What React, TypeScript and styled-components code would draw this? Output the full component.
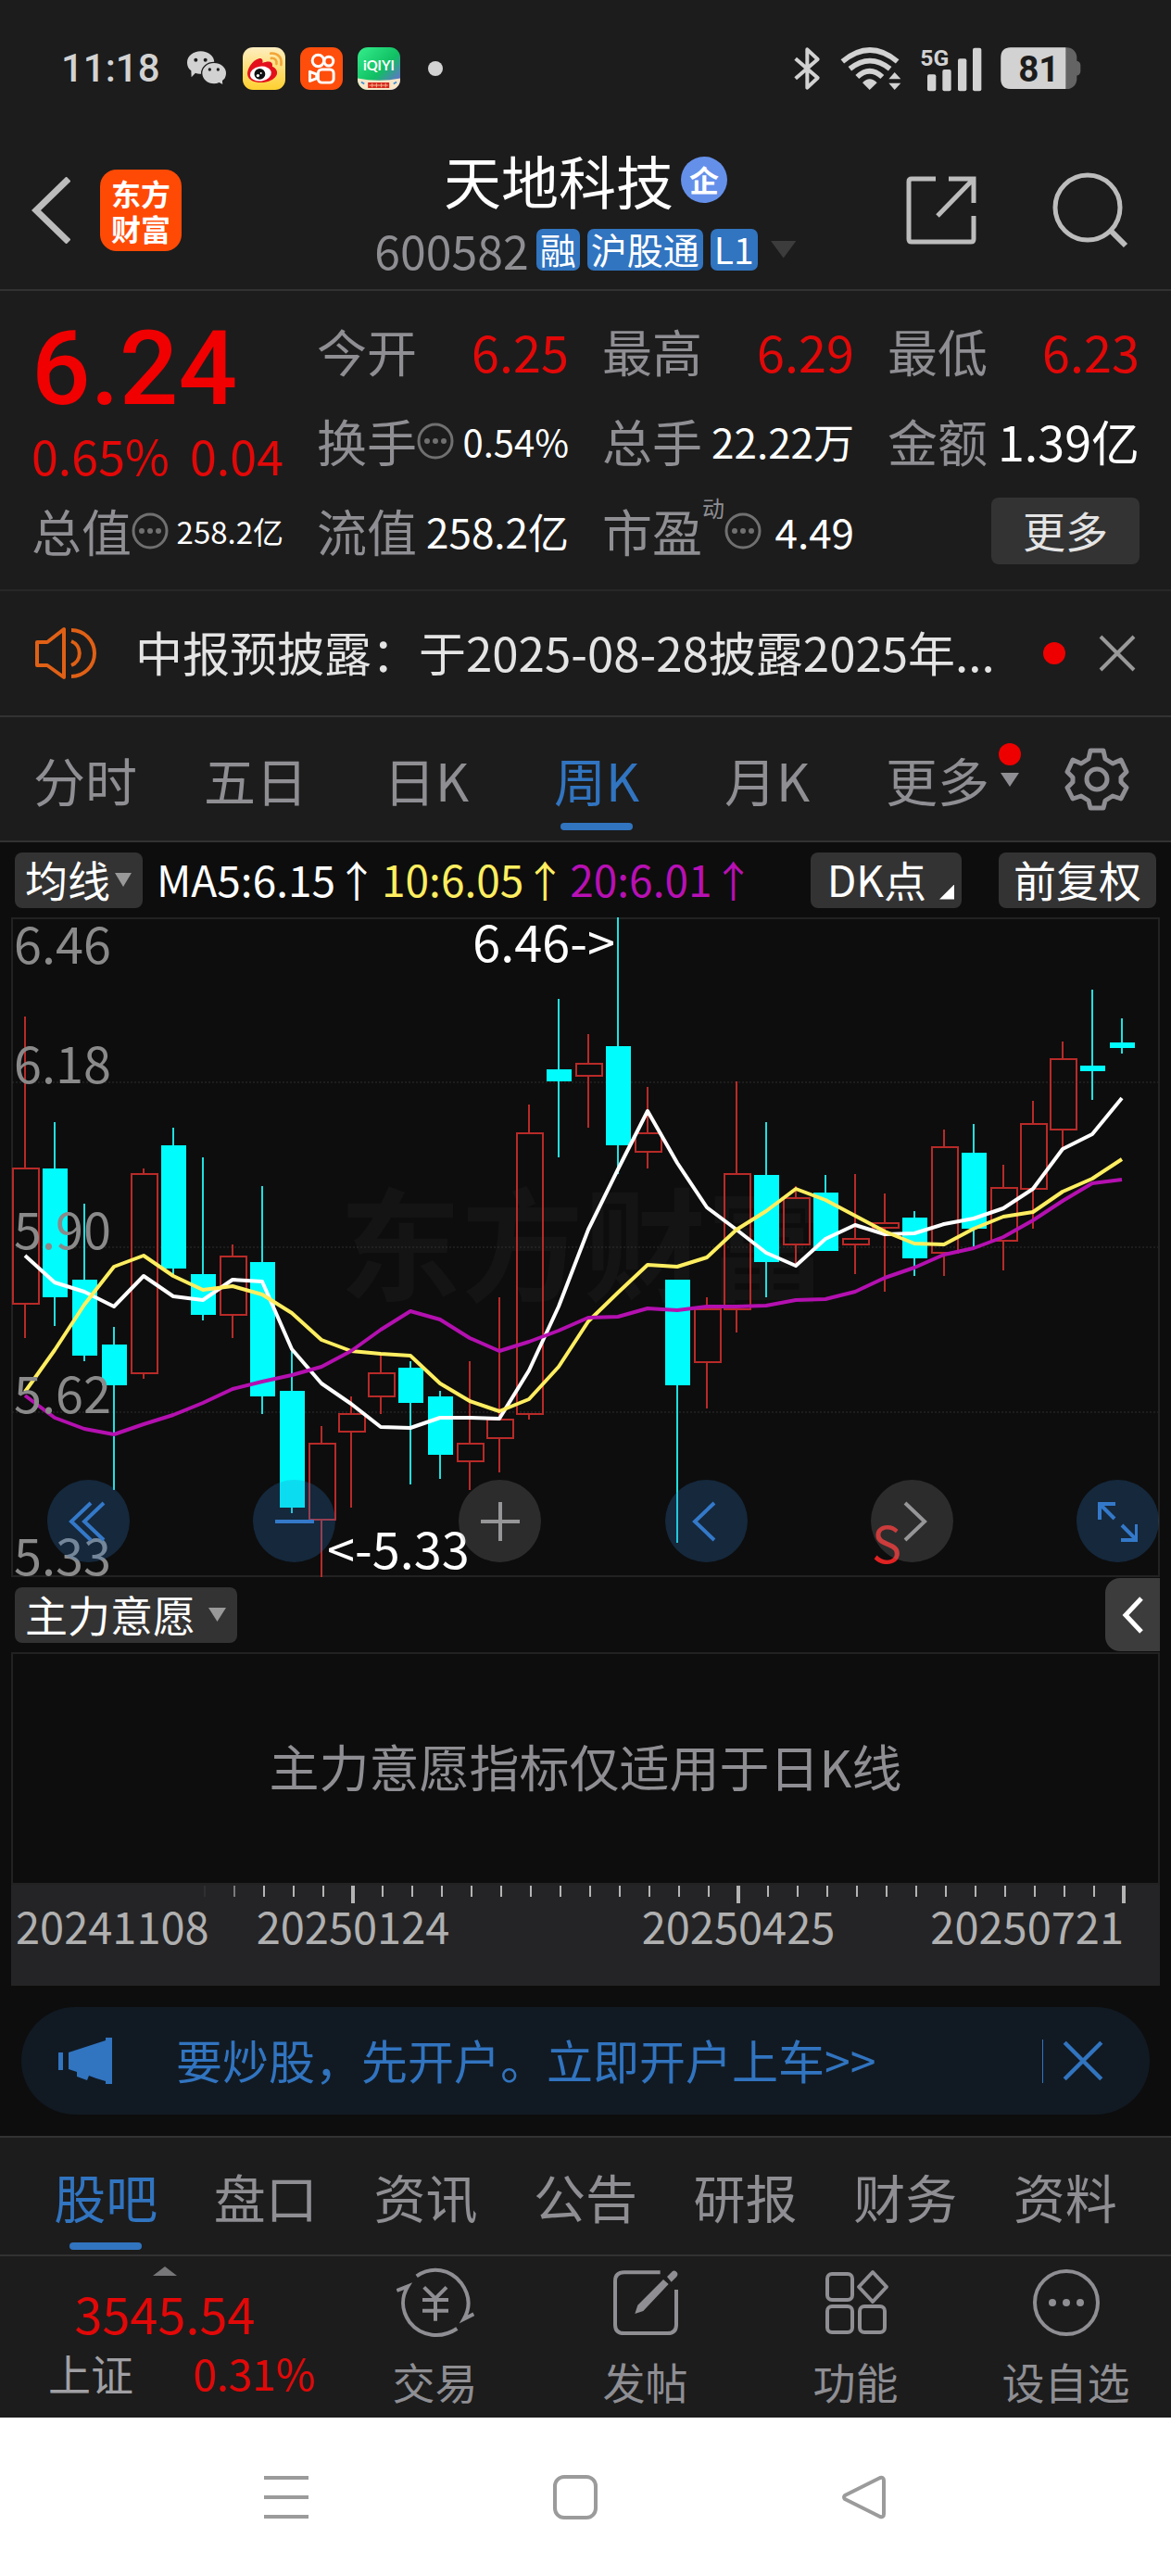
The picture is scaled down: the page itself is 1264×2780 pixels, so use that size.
import React from 'react';
import styled, { createGlobalStyle } from 'styled-components';

const c = {
  panel: '#1c1c1c',
  dark: '#0d0d0d',
  line: '#323232',
  frame: '#222222',
  grey: '#8e8e93',
  blue: '#3174c0',
  red: '#e20808',
  chip: '#333333',
  status: '#d2d2d2',
};

const GlobalStyle = createGlobalStyle`
  * { box-sizing: border-box; }
  body {
    margin: 0;
    background: #ffffff;
    font-family: "Noto Sans CJK SC", "Noto Sans", sans-serif;
    color: #ffffff;
  }
  button, select {
    font: inherit;
    color: inherit;
    background: none;
    border: 0;
    border-radius: 0;
    padding: 0;
    margin: 0;
    cursor: pointer;
  }
  svg { display: block; flex: none; }
`;

const Page = styled.div`
  display: flex;
  flex-direction: column;
  background: ${c.panel};
`;

/* ---------- status bar ---------- */

const StatusBar = styled.div`
  display: flex;
  align-items: center;
  justify-content: space-between;
  height: 148px;
  padding: 0 97px 0 66px;
`;

const StatusGroup = styled.div<{ $gap: number }>`
  display: flex;
  align-items: center;
  gap: ${p => p.$gap}px;
`;

const Clock = styled.time`
  font-family: Roboto, sans-serif;
  font-size: 42px;
  font-weight: 500;
  line-height: 48px;
  color: ${c.status};
  margin-right: 12px;
`;

const Dot = styled.span`
  width: 16px;
  height: 16px;
  margin-left: 14px;
  border-radius: 50%;
  background: ${c.status};
`;

/* ---------- header ---------- */

const Header = styled.header`
  display: grid;
  grid-template-columns: 1fr auto 1fr;
  align-items: center;
  height: 166px;
  padding: 0 34px 6px;
  border-bottom: 2px solid ${c.line};
`;

const HeaderSide = styled.div<{ $end?: boolean }>`
  display: flex;
  align-items: center;
  gap: ${p => (p.$end ? 82 : 32)}px;
  justify-content: ${p => (p.$end ? 'flex-end' : 'flex-start')};
  padding-right: ${p => (p.$end ? 12 : 0)}px;
`;

const Logo = styled.a`
  display: flex;
  flex-direction: column;
  justify-content: center;
  align-items: center;
  width: 88px;
  height: 88px;
  border-radius: 18px;
  background: #ff4a05;
  color: #ffffff;
  font-size: 32px;
  font-weight: 700;
  line-height: 38px;
  text-decoration: none;
`;

const TitleBlock = styled.div`
  display: flex;
  flex-direction: column;
  align-items: center;
  gap: 22px;
`;

const TitleLine = styled.div`
  display: flex;
  align-items: center;
  gap: 8px;
`;

const Title = styled.h1`
  margin: 0;
  font-size: 62px;
  font-weight: 400;
  line-height: 62px;
`;

const Badge = styled.span`
  width: 50px;
  height: 50px;
  border-radius: 50%;
  background: #6590ea;
  font-size: 32px;
  font-weight: 700;
  line-height: 48px;
  text-align: center;
`;

const Code = styled.span`
  font-size: 50px;
  line-height: 45px;
  color: ${c.grey};
`;

const Tag = styled.span`
  height: 45px;
  padding: 0 4px;
  border-radius: 7px;
  background: ${c.blue};
  font-size: 39px;
  line-height: 43px;
`;

const Caret = styled.span<{ $w: number; $h: number; $color: string; $up?: boolean }>`
  flex: none;
  width: ${p => p.$w}px;
  height: ${p => p.$h}px;
  background: ${p => p.$color};
  clip-path: ${p => (p.$up ? 'polygon(0 100%, 50% 0, 100% 100%)' : 'polygon(0 0, 100% 0, 50% 100%)')};
`;

const CaretButton = styled.button`
  padding: 0 0 0 6px;
  display: flex;
`;

const IconButton = styled.button`
  display: flex;
  align-items: center;
  justify-content: center;
`;

/* ---------- quote ---------- */

const Quote = styled.section`
  display: grid;
  grid-template-columns: repeat(4, 1fr);
  column-gap: 36px;
  padding: 16px 34px 15px;
  border-bottom: 2px solid #272727;
`;

const Column = styled.div`
  display: flex;
  flex-direction: column;
`;

const Price = styled.div`
  height: 128px;
  font-family: Roboto, sans-serif;
  font-size: 112px;
  font-weight: 500;
  line-height: 136px;
  color: #f00000;
`;

const Change = styled.div`
  display: flex;
  justify-content: space-between;
  height: 66px;
  font-size: 52px;
  line-height: 66px;
  color: ${c.red};
`;

const Cell = styled.div`
  display: flex;
  align-items: center;
  height: 97px;
  white-space: nowrap;
`;

const CellLabel = styled.span`
  font-size: 54px;
  line-height: 60px;
  color: ${c.grey};
`;

const Sup = styled.sup`
  align-self: flex-start;
  margin-top: 10px;
  font-size: 24px;
  line-height: 28px;
  color: ${c.grey};
`;

const CellValue = styled.span<{ $size: number; $up?: boolean }>`
  margin-left: auto;
  font-size: ${p => p.$size}px;
  line-height: 60px;
  color: ${p => (p.$up ? c.red : '#ffffff')};
`;

const MoreButton = styled.button`
  width: 160px;
  height: 72px;
  margin-left: auto;
  border-radius: 8px;
  background: ${c.chip};
  font-size: 46px;
  line-height: 68px;
  padding-bottom: 4px;
  color: #e4e4e4;
`;

/* ---------- notice ---------- */

const Notice = styled.section`
  display: flex;
  align-items: center;
  height: 136px;
  padding: 0 38px;
  border-bottom: 2px solid ${c.line};
`;

const NoticeText = styled.a`
  flex: 1;
  min-width: 0;
  margin: 0 50px 0 40px;
  padding-bottom: 4px;
  font-size: 51px;
  line-height: 76px;
  color: #e4e4e4;
  text-decoration: none;
  white-space: nowrap;
`;

const RedDot = styled.span`
  flex: none;
  width: 24px;
  height: 24px;
  border-radius: 50%;
  background: #ee0000;
`;

const NoticeClose = styled(IconButton)`
  margin-left: 36px;
  color: #999999;
`;

/* ---------- tabs ---------- */

const PeriodTabs = styled.nav`
  display: flex;
  height: 135px;
  border-bottom: 2px solid ${c.line};
`;

const SectionTabs = styled.nav`
  display: flex;
  height: 130px;
  padding: 0 28px;
  border-top: 2px solid ${c.line};
  border-bottom: 2px solid ${c.line};
`;

const Tab = styled.button<{ $active?: boolean }>`
  position: relative;
  flex: 1;
  font-size: 56px;
  line-height: 64px;
  color: ${p => (p.$active ? c.blue : c.grey)};
`;

const Underline = styled.span<{ $bottom: number }>`
  position: absolute;
  left: 50%;
  bottom: ${p => p.$bottom}px;
  width: 78px;
  height: 8px;
  margin-left: -39px;
  border-radius: 4px;
  background: ${c.blue};
`;

const TabMark = styled.span`
  position: absolute;
  top: 28px;
  right: 2px;
  display: flex;
  flex-direction: column;
  align-items: center;
  gap: 8px;
`;

const GearButton = styled(IconButton)`
  width: 160px;
`;

/* ---------- chart ---------- */

const ChartArea = styled.main`
  background: ${c.dark};
`;

const ChartInner = styled.div`
  padding: 0 12px;
`;

const Indicators = styled.div`
  display: flex;
  align-items: center;
  height: 81px;
  padding: 0 4px;
`;

const Chip = styled.label`
  display: flex;
  align-items: center;
  height: 60px;
  padding: 0 12px 0 11px;
  border-radius: 8px;
  background: ${c.chip};
`;

const ChipSelect = styled.select<{ $gap: number }>`
  appearance: none;
  outline: none;
  margin-right: ${p => p.$gap}px;
  padding-bottom: 4px;
  font-size: 46px;
  line-height: 68px;
`;

const ChipButton = styled.button<{ $wide?: boolean }>`
  display: flex;
  align-items: center;
  gap: 14px;
  height: 60px;
  padding: ${p => (p.$wide ? '0 16px 4px' : '0 8px 4px 18px')};
  border-radius: 8px;
  background: ${c.chip};
  font-size: 46px;
  line-height: 56px;
`;

const Corner = styled.span`
  width: 16px;
  height: 16px;
  margin-top: 30px;
  background: #ffffff;
  clip-path: polygon(100% 0, 100% 100%, 0 100%);
`;

const MaValues = styled.div`
  display: flex;
  flex: 1;
  gap: 4px;
  margin-left: 15px;
  padding-bottom: 4px;
  white-space: nowrap;
`;

const Ma = styled.span<{ $color: string }>`
  font-size: 46px;
  line-height: 60px;
  color: ${p => p.$color};
`;

const ChipRow = styled.div`
  display: flex;
  gap: 40px;
`;

const Plot = styled.div`
  position: relative;
`;

const PlotSvg = styled.svg`
  width: 100%;
  height: auto;
  overflow: visible;
  font-family: "Noto Sans CJK SC", sans-serif;
`;

const PlotControls = styled.div`
  position: absolute;
  left: 39px;
  right: 1px;
  bottom: 16px;
  display: flex;
  justify-content: space-between;
`;

const RoundButton = styled.button<{ $muted?: boolean }>`
  width: 89px;
  height: 89px;
  border-radius: 50%;
  display: flex;
  align-items: center;
  justify-content: center;
  color: ${p => (p.$muted ? '#969699' : '#3479c9')};
  background: ${p => (p.$muted ? 'rgba(138, 138, 138, 0.25)' : 'rgba(46, 124, 205, 0.25)')};
`;

const SubHeader = styled.div`
  display: flex;
  align-items: center;
  justify-content: space-between;
  height: 81px;
  padding-left: 4px;
`;

const Expand = styled.button`
  display: flex;
  align-items: center;
  justify-content: center;
  width: 59px;
  height: 79px;
  border-radius: 16px 0 0 16px;
  background: #3c3c3c;
`;

const SubPanel = styled.div`
  display: flex;
  align-items: center;
  justify-content: center;
  height: 251px;
  padding-bottom: 6px;
  border: 2px solid ${c.frame};
  font-size: 54px;
  line-height: 64px;
  color: ${c.grey};
`;

const Axis = styled.div`
  background: #242426;
`;

/* ---------- promo ---------- */

const PromoWrap = styled.div`
  padding: 23px;
`;

const Promo = styled.div`
  display: flex;
  align-items: center;
  height: 116px;
  padding: 0 50px 0 39px;
  border-radius: 58px;
  background: #111a23;
  color: ${c.blue};
`;

const PromoLink = styled.a`
  flex: 1;
  margin-left: 68px;
  padding-bottom: 4px;
  font-size: 50px;
  line-height: 60px;
  color: inherit;
  text-decoration: none;
  white-space: nowrap;
`;

const Divider = styled.span`
  width: 1px;
  height: 47px;
  margin-right: 21px;
  background: ${c.blue};
`;

/* ---------- bottom ---------- */

const BottomBar = styled.footer`
  display: flex;
  height: 174px;
`;

const IndexBox = styled.button`
  display: flex;
  flex-direction: column;
  align-items: center;
  width: 356px;
  padding-top: 11px;
  color: ${c.red};
`;

const IndexValue = styled.span`
  margin-top: 10px;
  font-size: 54px;
  line-height: 60px;
`;

const IndexRow = styled.span`
  display: flex;
  justify-content: space-between;
  align-self: stretch;
  padding: 0 16px 0 52px;
  margin-top: 8px;
  font-size: 46px;
  line-height: 52px;
`;

const IndexName = styled.span`
  color: #a0a0a4;
`;

const Action = styled.button`
  display: flex;
  flex-direction: column;
  align-items: center;
  flex: 1;
  padding-top: 8px;
  gap: 14px;
  font-size: 46px;
  line-height: 56px;
  color: ${c.grey};
`;

const SystemNav = styled.nav`
  display: grid;
  grid-template-columns: repeat(3, 1fr);
  align-items: center;
  height: 171px;
  padding: 0 175px 0 153px;
  background: #ffffff;
`;

/* ---------- data ---------- */

type Candle = [high: number, top: number, bottom: number, low: number, up: 0 | 1];

const candles: Candle[] = [
  [1097, 1261, 1407, 1444, 1], [1211, 1261, 1400, 1431, 0], [1299, 1381, 1463, 1469, 0],
  [1432, 1451, 1495, 1608, 0], [1261, 1267, 1482, 1488, 1], [1217, 1236, 1369, 1375, 0],
  [1249, 1375, 1419, 1425, 0], [1343, 1356, 1419, 1444, 1], [1280, 1362, 1507, 1526, 0],
  [1455, 1501, 1627, 1633, 0], [1539, 1558, 1640, 1702, 1], [1507, 1526, 1545, 1627, 1],
  [1463, 1482, 1507, 1526, 1], [1469, 1476, 1514, 1602, 0], [1501, 1507, 1570, 1596, 0],
  [1469, 1558, 1577, 1608, 1], [1400, 1532, 1552, 1589, 1], [1192, 1223, 1526, 1532, 1],
  [1078, 1154, 1167, 1249, 0], [1116, 1148, 1161, 1217, 1], [990, 1129, 1236, 1267, 0],
  [1173, 1223, 1243, 1261, 1], [1381, 1381, 1495, 1665, 0], [1400, 1413, 1470, 1520, 1],
  [1167, 1267, 1413, 1438, 1], [1211, 1268, 1362, 1400, 0], [1280, 1293, 1343, 1368, 1],
  [1268, 1287, 1350, 1350, 0], [1267, 1337, 1343, 1375, 1], [1288, 1320, 1325, 1394, 1],
  [1307, 1314, 1358, 1377, 0], [1219, 1238, 1352, 1377, 1], [1213, 1244, 1326, 1345, 0],
  [1257, 1282, 1339, 1371, 1], [1188, 1213, 1283, 1326, 1], [1124, 1143, 1219, 1240, 1],
  [1068, 1150, 1156, 1187, 0], [1099, 1125, 1131, 1137, 0],
];

const ma5 = [1355, 1384, 1394, 1410, 1377, 1399, 1403, 1381, 1383, 1456, 1493, 1515, 1540, 1541, 1530, 1530, 1531, 1479, 1410, 1327, 1262, 1199, 1255, 1303, 1327, 1352, 1366, 1337, 1322, 1332, 1331, 1321, 1315, 1304, 1283, 1240, 1224, 1185];
const ma10 = [1502, 1457, 1408, 1367, 1355, 1377, 1392, 1388, 1397, 1417, 1446, 1458, 1461, 1463, 1493, 1512, 1523, 1510, 1475, 1426, 1395, 1365, 1367, 1357, 1327, 1307, 1283, 1295, 1312, 1329, 1342, 1343, 1326, 1313, 1308, 1286, 1272, 1251];
const ma20 = [1506, 1530, 1542, 1548, 1537, 1527, 1514, 1499, 1491, 1484, 1475, 1458, 1435, 1415, 1424, 1444, 1458, 1448, 1436, 1422, 1421, 1412, 1414, 1410, 1410, 1409, 1403, 1402, 1394, 1379, 1368, 1354, 1347, 1335, 1317, 1296, 1277, 1273];

const candleX = (i: number) => 27 + 32 * i;
const points = (ys: number[]) => ys.map((y, i) => `${candleX(i)},${y}`).join(' ');

const priceLabels: [string, number][] = [
  ['6.46', 1040], ['6.18', 1169], ['5.90', 1348], ['5.62', 1525], ['5.33', 1700],
];

/* ---------- icons ---------- */

const Dots = () => (
  <svg width="40" height="40" viewBox="0 0 40 40">
    <circle cx="20" cy="20" r="18" fill="none" stroke="#707070" strokeWidth="3" />
    {[11, 20, 29].map(x => <circle key={x} cx={x} cy="20" r="3" fill="#707070" />)}
  </svg>
);

const Cross = ({ size }: { size: number }) => (
  <svg width={size} height={size} viewBox="0 0 40 40" fill="none" stroke="currentColor" strokeWidth="4">
    <path d="M2 2L38 38M38 2L2 38" />
  </svg>
);

const WeChat = () => (
  <svg width="45" height="46" viewBox="36 34 135 138">
    <path d="M39 84C39 62 59 47 83 47C107 47 127 62 127 84C127 106 107 120 83 120C76 120 70 119 66 117L53 131L52 110C44 104 39 95 39 84Z" fill={c.status} />
    <path d="M86 118C86 98 104 83 126 83C149 83 167 98 167 118C167 129 162 138 155 143L156 157L143 150C138 153 132 154 126 154C104 154 86 138 86 118Z" fill={c.status} stroke={c.panel} strokeWidth="4" />
    <g fill={c.panel}>
      <circle cx="67" cy="75" r="6" /><circle cx="98" cy="75" r="6" />
      <circle cx="112" cy="106" r="5" /><circle cx="139" cy="106" r="5" />
    </g>
  </svg>
);

const Weibo = () => (
  <svg width="46" height="46" viewBox="218 32 140 140">
    <defs>
      <linearGradient id="wb" x1="0" y1="0" x2="0" y2="1">
        <stop offset="0" stopColor="#fdeec0" /><stop offset="1" stopColor="#ffd02e" />
      </linearGradient>
    </defs>
    <rect x="218" y="32" width="140" height="140" rx="34" fill="url(#wb)" />
    <path d="M234 124C230 104 250 74 271 69C283 67 285 76 283 84C302 75 319 79 315 95C332 101 336 120 324 131C302 155 240 154 234 124Z" fill="#e3101c" />
    <ellipse cx="277" cy="119" rx="35" ry="24" transform="rotate(-8 277 119)" fill="#fff" />
    <circle cx="274" cy="120" r="18" fill="#111" />
    <circle cx="268" cy="125" r="5" fill="#fff" /><circle cx="278" cy="117" r="3" fill="#fff" />
    <g fill="none" stroke="#f3a63a" strokeWidth="8" strokeLinecap="round">
      <path d="M310 52C334 50 348 66 344 90" /><path d="M312 68C324 67 331 76 329 87" />
    </g>
  </svg>
);

const Kuaishou = () => (
  <svg width="46" height="46" viewBox="404 32 140 140">
    <rect x="404" y="32" width="140" height="140" rx="34" fill="#ff4e0c" />
    <g fill="none" stroke="#fff" strokeWidth="9" strokeLinejoin="round">
      <circle cx="463" cy="76" r="19" /><circle cx="498" cy="78" r="15" />
      <rect x="463" y="105" width="51" height="43" rx="12" />
      <path d="M436 112L458 121V134L436 143Z" />
    </g>
  </svg>
);

const Iqiyi = () => (
  <svg width="46" height="46" viewBox="590 32 140 140">
    <defs>
      <linearGradient id="qy" x1="0" y1="0" x2="1" y2="1">
        <stop offset="0" stopColor="#35ee8c" /><stop offset="0.55" stopColor="#10bf63" /><stop offset="0.9" stopColor="#6a6bd6" />
      </linearGradient>
      <clipPath id="qc"><rect x="590" y="32" width="140" height="140" rx="34" /></clipPath>
    </defs>
    <g clipPath="url(#qc)">
      <rect x="590" y="32" width="140" height="140" fill="url(#qy)" />
      <path d="M590 134Q660 148 730 134V172H590Z" fill="#f8e6c8" />
      <path d="M624 148H694V166H624Z" fill="#d5281c" />
      <path d="M638 150V164M652 150V164M668 150V164M682 150V164M628 157H690" stroke="#f3b28c" strokeWidth="3" />
      <path d="M602 146L612 152M718 146L708 152" stroke="#3d8fd8" strokeWidth="5" />
    </g>
    <text x="660" y="108" textAnchor="middle" fontFamily="Lato, sans-serif" fontWeight="700" fontSize="45" fill="#fff">iQIYI</text>
  </svg>
);

const Bluetooth = () => (
  <svg width="30" height="48" viewBox="36 30 90 144" fill="none" stroke={c.status} strokeWidth="12" strokeLinejoin="round">
    <path d="M44 70L116 132L82 164V40L116 72L44 134" />
  </svg>
);

const Wifi = () => (
  <svg width="68" height="48" viewBox="206 30 204 144">
    <g fill="none" stroke={c.status} strokeWidth="17">
      <path d="M216 79Q305 5 394 79" /><path d="M240 103Q305 51 370 103" /><path d="M264 129Q304 91 345 129" />
    </g>
    <g fill={c.status}>
      <path d="M281 148Q304 124 328 148L304 171Z" />
      <path d="M366 136L385 114L405 136Z" /><path d="M366 149H405L385 171Z" />
    </g>
  </svg>
);

const SignalSvg = styled.svg`
  overflow: visible;
`;

const Signal = () => (
  <SignalSvg width="66" height="50" viewBox="460 24 198 150" fill={c.status}>
    <text x="458" y="90" fontFamily="Roboto, sans-serif" fontWeight="700" fontSize="74">5G</text>
    <rect x="481" y="118" width="28" height="54" rx="6" /><rect x="530" y="102" width="28" height="70" rx="6" />
    <rect x="580" y="67" width="28" height="105" rx="6" /><rect x="628" y="32" width="28" height="140" rx="6" />
  </SignalSvg>
);

const Battery = () => (
  <svg width="87" height="48" viewBox="719 33 261 144">
    <rect x="940" y="80" width="38" height="48" rx="14" fill="#646464" />
    <rect x="720" y="37" width="246" height="134" rx="32" fill="#646464" />
    <path d="M930 37H752Q720 37 720 69V139Q720 171 752 171H930Z" fill={c.status} />
    <text x="843" y="146" textAnchor="middle" fontFamily="Roboto, sans-serif" fontWeight="700" fontSize="116" fill={c.panel}>81</text>
  </svg>
);

const Gear = () => (
  <svg width="70" height="70" viewBox="0 0 70 70" fill="none" stroke={c.grey} strokeWidth="5" strokeLinejoin="round">
    <path d="M28 4H42L44 13L52 18L61 14L67 27L61 33V38L67 44L61 56L52 53L44 58L42 66H28L26 58L18 53L9 56L3 44L9 38V33L3 27L9 14L18 18L26 13Z" />
    <circle cx="35" cy="35" r="11" />
  </svg>
);

const Speaker = () => (
  <svg width="68" height="58" viewBox="0 0 68 58" fill="none" stroke="#e06015" strokeWidth="4" strokeLinejoin="round">
    <path d="M2 17H13L31 3V55L13 42H2Z" />
    <path d="M39 16A14 14 0 0 1 39 42M39 4A25 25 0 0 1 39 54" />
  </svg>
);

const Megaphone = () => (
  <svg width="60" height="52" viewBox="0 0 60 52" fill="currentColor">
    <path d="M1 17H6V36H1Z" />
    <path d="M12 17L52 4V1H59V51H52V48L42 45L34 42L32 47L21 43V38L12 35Z" />
  </svg>
);

/* ---------- parts ---------- */

type CellProps = { label: string; value?: string; size?: number; up?: boolean; info?: boolean; sup?: string };

const QuoteCell = ({ label, value, size = 44, up, info, sup }: CellProps) => (
  <Cell>
    <CellLabel>{label}</CellLabel>
    {sup && <Sup>{sup}</Sup>}
    {info && <Dots />}
    <CellValue $size={size} $up={up}>{value}</CellValue>
  </Cell>
);

const KLineChart = () => (
  <PlotSvg viewBox="12 990 1240 712" role="img" aria-label="周K">
    <text x="366" y="1394" fontSize="132" fontWeight="700" fill="#141414">东方财富</text>
    <rect x="13" y="991" width="1238" height="710" fill="none" stroke={c.frame} strokeWidth="2" />
    {[1168, 1346, 1524].map(y => (
      <line key={y} x1="13" x2="1250" y1={y} y2={y} stroke="#2e2e2e" strokeDasharray="2 2" />
    ))}
    {candles.map(([high, top, bottom, low, up], i) => {
      const x = candleX(i);
      return up ? (
        <g key={i} stroke="#b82a28" strokeWidth="2" fill="none">
          <path d={`M${x} ${high}V${top}M${x} ${bottom}V${low}`} />
          <rect x={x - 13} y={top} width="28" height={bottom - top} />
        </g>
      ) : (
        <g key={i}>
          <path d={`M${x} ${high}V${low}`} stroke="#20e0e0" strokeWidth="2" />
          <rect x={x - 13} y={top} width="27" height={bottom - top} fill="#00fcfc" />
        </g>
      );
    })}
    <g fill="none" strokeWidth="4" strokeLinejoin="round">
      <polyline points={points(ma5)} stroke="#ffffff" />
      <polyline points={points(ma10)} stroke="#ffee60" />
      <polyline points={points(ma20)} stroke="#b410b0" />
    </g>
    <g fontSize="54" fill="#8a8a8a">
      {priceLabels.map(([t, y]) => <text key={t} x="15" y={y}>{t}</text>)}
    </g>
    <g fontSize="54" fill="#ffffff">
      <text x="664" y="1038" textAnchor="end">6.46-&gt;</text>
      <text x="353" y="1693">&lt;-5.33</text>
    </g>
    <text x="941" y="1687" fontSize="54" fill="#e02222">S</text>
  </PlotSvg>
);

const TimeAxis = () => (
  <PlotSvg viewBox="12 0 1240 109">
    {Array.from({ length: 32 }, (_, i) => {
      const x = 220 + 32 * i;
      const major = i === 5 || i === 18 || i === 31;
      return (
        <rect key={i} x={major ? x - 1 : x} y="1" width={major ? 4 : 2} height={major ? 19 : 12} fill="#b4b4b4" opacity={i === 0 ? 0.08 : i === 1 ? 0.6 : 1} />
      );
    })}
    <g fontSize="47" fill="#b0b0b0">
      <text x="17" y="64">20241108</text>
      <text x="381" y="64" textAnchor="middle">20250124</text>
      <text x="797" y="64" textAnchor="middle">20250425</text>
      <text x="1213" y="64" textAnchor="end">20250721</text>
    </g>
  </PlotSvg>
);

const controls: { name: string; muted?: boolean; d: string }[] = [
  { name: '最左', d: 'M22 0L1 20L22 40M36 0L15 20L36 40' },
  { name: '缩小', d: 'M-1 20H41' },
  { name: '放大', muted: true, d: 'M-1 20H41M20 -1V41' },
  { name: '左移', d: 'M29 0L8 20L29 40' },
  { name: '右移', muted: true, d: 'M13 0L34 20L13 40' },
  { name: '全屏', d: 'M18 1H1V18M1 1L17 17M24 40H41V23M41 40L25 24' },
];

export default function App() {
  return (
    <>
      <GlobalStyle />
      <Page>
        <StatusBar>
          <StatusGroup $gap={16}>
            <Clock>11:18</Clock>
            <WeChat />
            <Weibo />
            <Kuaishou />
            <Iqiyi />
            <Dot />
          </StatusGroup>
          <StatusGroup $gap={20}>
            <Bluetooth />
            <Wifi />
            <Signal />
            <Battery />
          </StatusGroup>
        </StatusBar>

        <Header>
          <HeaderSide>
            <IconButton aria-label="返回">
              <svg width="42" height="72" viewBox="0 0 42 72" fill="none" stroke="#bcbcbc" strokeWidth="7">
                <path d="M40 2L5 36L40 70" />
              </svg>
            </IconButton>
            <Logo href="#home"><span>东方</span><span>财富</span></Logo>
          </HeaderSide>
          <TitleBlock>
            <TitleLine>
              <Title>天地科技</Title>
              <Badge>企</Badge>
            </TitleLine>
            <TitleLine>
              <Code>600582</Code>
              <Tag>融</Tag>
              <Tag>沪股通</Tag>
              <Tag>L1</Tag>
              <CaretButton aria-label="展开"><Caret $w={28} $h={19} $color="#3c3c3c" /></CaretButton>
            </TitleLine>
          </TitleBlock>
          <HeaderSide $end>
            <IconButton aria-label="分享">
              <svg width="76" height="76" viewBox="0 0 76 76" fill="none" stroke="#bcbcbc" strokeWidth="5">
                <path d="M32 4H6Q3 4 3 7V69Q3 72 6 72H70Q73 72 73 69V44M46 4H73V30M72 5L34 44" />
              </svg>
            </IconButton>
            <IconButton aria-label="搜索">
              <svg width="82" height="82" viewBox="0 0 82 82" fill="none" stroke="#bcbcbc" strokeWidth="5">
                <circle cx="38" cy="38" r="35" /><path d="M62 62L79 79" strokeWidth="6" />
              </svg>
            </IconButton>
          </HeaderSide>
        </Header>

        <Quote>
          <Column>
            <Price>6.24</Price>
            <Change><span>0.65%</span><span>0.04</span></Change>
            <QuoteCell label="总值" value="258.2亿" size={33} info />
          </Column>
          <Column>
            <QuoteCell label="今开" value="6.25" size={54} up />
            <QuoteCell label="换手" value="0.54%" size={40} info />
            <QuoteCell label="流值" value="258.2亿" />
          </Column>
          <Column>
            <QuoteCell label="最高" value="6.29" size={54} up />
            <QuoteCell label="总手" value="22.22万" />
            <QuoteCell label="市盈" value="4.49" sup="动" info />
          </Column>
          <Column>
            <QuoteCell label="最低" value="6.23" size={54} up />
            <QuoteCell label="金额" value="1.39亿" size={52} />
            <Cell><MoreButton>更多</MoreButton></Cell>
          </Column>
        </Quote>

        <Notice>
          <Speaker />
          <NoticeText href="#notice">中报预披露：于2025-08-28披露2025年...</NoticeText>
          <RedDot />
          <NoticeClose aria-label="关闭"><Cross size={40} /></NoticeClose>
        </Notice>

        <PeriodTabs>
          {['分时', '五日', '日K', '周K', '月K'].map(t => (
            <Tab key={t} $active={t === '周K'}>
              {t}
              {t === '周K' && <Underline $bottom={11} />}
            </Tab>
          ))}
          <Tab>
            更多
            <TabMark><RedDot /><Caret $w={20} $h={15} $color={c.grey} /></TabMark>
          </Tab>
          <GearButton aria-label="设置"><Gear /></GearButton>
        </PeriodTabs>

        <ChartArea>
          <ChartInner>
            <Indicators>
              <Chip>
                <ChipSelect $gap={5} aria-label="指标"><option>均线</option></ChipSelect>
                <Caret $w={18} $h={15} $color="#999" />
              </Chip>
              <MaValues>
                <Ma $color="#ffffff">MA5:6.15↑</Ma>
                <Ma $color="#ffee60">10:6.05↑</Ma>
                <Ma $color="#b810b4">20:6.01↑</Ma>
              </MaValues>
              <ChipRow>
                <ChipButton>DK点<Corner /></ChipButton>
                <ChipButton $wide>前复权</ChipButton>
              </ChipRow>
            </Indicators>

            <Plot>
              <KLineChart />
              <PlotControls>
                {controls.map(b => (
                  <RoundButton key={b.name} $muted={b.muted} aria-label={b.name}>
                    <svg width="44" height="44" viewBox="-2 -2 44 44" fill="none" stroke="currentColor" strokeWidth="4"><path d={b.d} /></svg>
                  </RoundButton>
                ))}
              </PlotControls>
            </Plot>

            <SubHeader>
              <Chip>
                <ChipSelect $gap={14} aria-label="副图指标"><option>主力意愿</option></ChipSelect>
                <Caret $w={19} $h={15} $color="#999" />
              </Chip>
              <Expand aria-label="展开副图">
                <svg width="24" height="40" viewBox="0 0 24 40" fill="none" stroke="#fff" strokeWidth="5"><path d="M21 2L4 20L21 38" /></svg>
              </Expand>
            </SubHeader>
            <SubPanel>主力意愿指标仅适用于日K线</SubPanel>
            <Axis><TimeAxis /></Axis>
          </ChartInner>

          <PromoWrap>
            <Promo>
              <Megaphone />
              <PromoLink href="#open">要炒股，先开户。立即开户上车&gt;&gt;</PromoLink>
              <Divider />
              <IconButton aria-label="关闭广告"><Cross size={44} /></IconButton>
            </Promo>
          </PromoWrap>
        </ChartArea>

        <SectionTabs>
          {['股吧', '盘口', '资讯', '公告', '研报', '财务', '资料'].map(t => (
            <Tab key={t} $active={t === '股吧'}>
              {t}
              {t === '股吧' && <Underline $bottom={5} />}
            </Tab>
          ))}
        </SectionTabs>

        <BottomBar>
          <IndexBox>
            <Caret $w={26} $h={10} $color="#77777a" $up />
            <IndexValue>3545.54</IndexValue>
            <IndexRow><IndexName>上证</IndexName><span>0.31%</span></IndexRow>
          </IndexBox>
          <Action>
            <svg width="84" height="84" viewBox="81 40 252 252" fill="none" stroke="currentColor" strokeWidth="12">
              <path d="M146 80C196 46 256 58 290 102C322 146 318 186 299 219L331 203" />
              <path d="M277 250C226 284 160 276 124 230C94 188 98 146 118 113L82 127" />
              <path d="M170 116L207 152L243 116M165 157H249M165 192H249M207 150V225" />
            </svg>
            交易
          </Action>
          <Action>
            <svg width="84" height="84" viewBox="764 40 252 252">
              <path d="M937 68H820Q791 68 791 97V237Q791 265 820 265H960Q989 265 989 237V124" fill="none" stroke="currentColor" strokeWidth="12" />
              <path d="M947 91L964 106L882 193L855 202L864 174ZM959 82L977 64Q985 60 991 68Q996 74 990 82L973 99Z" fill="currentColor" />
            </svg>
            发帖
          </Action>
          <Action>
            <svg width="84" height="84" viewBox="0 0 84 84" fill="none" stroke="currentColor" strokeWidth="4" strokeLinejoin="round">
              <rect x="11" y="11" width="27" height="28" rx="5" />
              <path d="M60 9L75 25L60 41L45 25Z" />
              <rect x="11" y="46" width="27" height="28" rx="5" />
              <rect x="46" y="46" width="27" height="28" rx="5" />
            </svg>
            功能
          </Action>
          <Action>
            <svg width="84" height="84" viewBox="0 0 84 84" fill="currentColor">
              <circle cx="42" cy="42" r="34" fill="none" stroke="currentColor" strokeWidth="4" />
              <circle cx="27" cy="42" r="4" /><circle cx="42" cy="42" r="4" /><circle cx="57" cy="42" r="4" />
            </svg>
            设自选
          </Action>
        </BottomBar>

        <SystemNav>
          <IconButton aria-label="最近任务">
            <svg width="48" height="48" viewBox="0 0 48 48" stroke="#9b9b9b" strokeWidth="4"><path d="M0 3H48M0 24H48M0 45H48" /></svg>
          </IconButton>
          <IconButton aria-label="主屏幕">
            <svg width="48" height="48" viewBox="0 0 48 48" fill="none" stroke="#9b9b9b" strokeWidth="4"><rect x="2" y="2" width="44" height="44" rx="10" /></svg>
          </IconButton>
          <IconButton aria-label="系统返回">
            <svg width="48" height="48" viewBox="0 0 48 48" fill="none" stroke="#9b9b9b" strokeWidth="4" strokeLinejoin="round"><path d="M3 22L41 3Q45 2 45 6V42Q45 46 41 45L3 26Q1 24 3 22Z" /></svg>
          </IconButton>
        </SystemNav>
      </Page>
    </>
  );
}
